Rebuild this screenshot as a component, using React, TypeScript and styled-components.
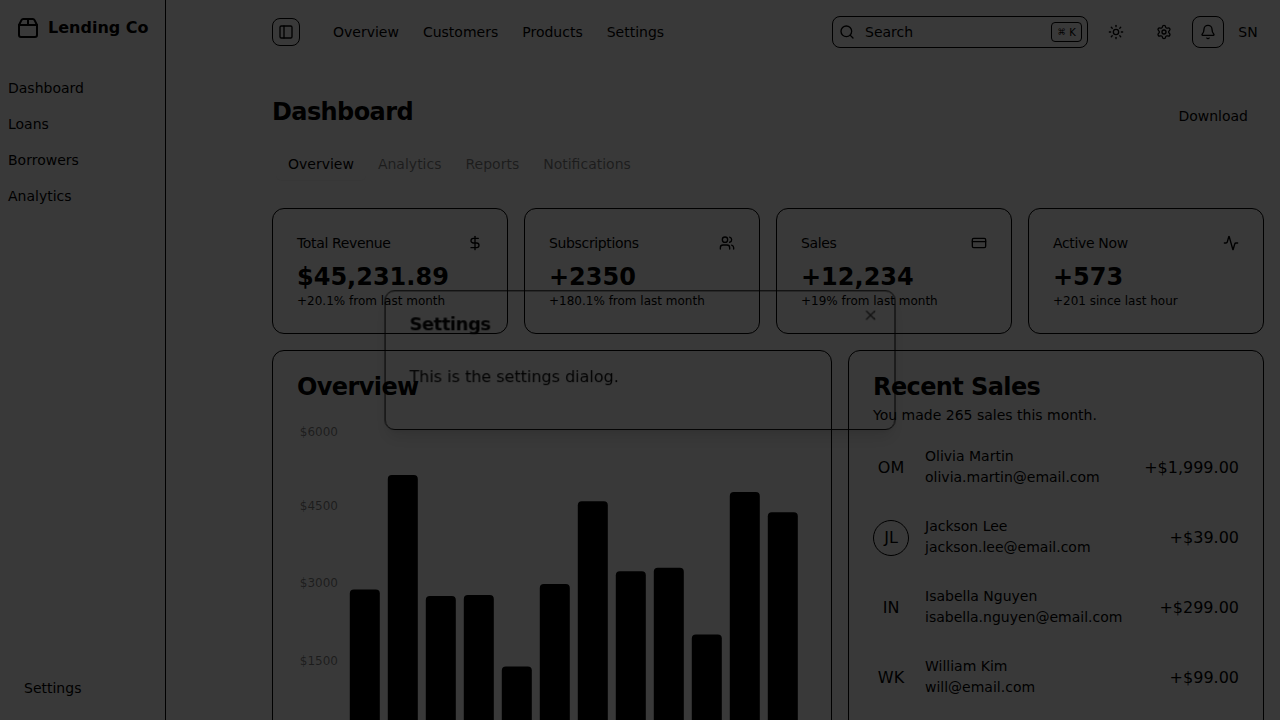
import React from 'react';
import styled, { createGlobalStyle } from 'styled-components';
import {
  Activity,
  Bell,
  CreditCard,
  DollarSign,
  PanelLeft,
  Search,
  Settings,
  Sun,
  Users,
  X,
} from 'lucide-react';

const GlobalStyle = createGlobalStyle`
  *, *::before, *::after { box-sizing: border-box; }
  html, body { margin: 0; height: 100%; overflow: hidden; }
  body {
    background: #fff;
    color: #000;
    font-family: "DejaVu Sans", sans-serif;
    font-size: 16px;
    line-height: 24px;
  }
  h1, h2, h3, p { margin: 0; font: inherit; }
  button { font: inherit; color: inherit; background: none; border: 0; padding: 0; }
`;

const Page = styled.div`
  display: flex;
  height: 100vh;
  overflow: hidden;
`;

const Sidebar = styled.aside`
  display: flex;
  flex-direction: column;
  flex: none;
  width: 166px;
  border-right: 1px solid #000;
  white-space: nowrap;
`;

const Brand = styled.div`
  display: flex;
  align-items: center;
  gap: 8px;
  padding: 16px;
  height: 56px;
  margin-bottom: 14px;
  font-weight: 700;
`;

const SideLinks = styled.nav`
  display: flex;
  flex-direction: column;
  flex: 1;
`;

const SideLink = styled.a`
  padding: 8px;
  font-size: 14px;
  line-height: 20px;
`;

const SideFooter = styled.div`
  padding: 6px 16px 14px;
  display: flex;
  flex-direction: column;
`;

const Main = styled.main`
  flex: 1;
  min-width: 0;
  padding: 0 16px 0 106px;
`;

const TopBar = styled.header`
  display: flex;
  align-items: center;
  height: 64px;
`;

const SquareButton = styled.button<{ $size: number; $outlined?: boolean }>`
  display: flex;
  align-items: center;
  justify-content: center;
  flex: none;
  width: ${(p) => p.$size}px;
  height: ${(p) => p.$size}px;
  border: 1px solid ${(p) => (p.$outlined ? '#000' : 'transparent')};
  border-radius: 8px;
  font-size: 14px;
`;

const TopNav = styled.nav`
  display: flex;
  gap: 24px;
  margin-left: 33px;
  font-size: 14px;
  line-height: 20px;
`;

const SearchBox = styled.div`
  display: flex;
  align-items: center;
  width: 256px;
  height: 32px;
  margin-left: auto;
  padding: 0 5px 0 6px;
  border: 1px solid #000;
  border-radius: 8px;
  font-size: 14px;
`;

const SearchLabel = styled.span`
  flex: 1;
  margin-left: 10px;
`;

const Shortcut = styled.kbd`
  display: flex;
  align-items: center;
  gap: 4px;
  width: 31px;
  height: 20px;
  padding: 0 0 0 6px;
  border: 1px solid #000;
  border-radius: 4px;
  font-family: "DejaVu Sans", sans-serif;
  font-size: 10px;
  line-height: 15px;
`;

const CommandKey = styled.span`
  font-family: "DejaVu Sans Mono", monospace;
  font-size: 12px;
  line-height: 16px;
`;

const Actions = styled.div`
  display: flex;
  margin-left: 12px;
`;

const ThemeSlot = styled.div`
  display: flex;
  gap: 16px;
  margin-right: 12px;
`;

const AccountSlot = styled.div`
  display: flex;
  gap: 8px;
`;

const TitleRow = styled.div`
  display: flex;
  justify-content: space-between;
  align-items: flex-start;
  height: 40px;
  margin: 32px 0 8px;
`;

const PageTitle = styled.h1`
  font-size: 24px;
  font-weight: 700;
  line-height: 32px;
  letter-spacing: -0.6px;
`;

const DownloadButton = styled.button`
  height: 40px;
  padding: 0 16px;
  font-size: 14px;
`;

const TabList = styled.div`
  display: flex;
  height: 40px;
  padding: 4px;
  margin-bottom: 24px;
`;

const Tab = styled.button<{ $active?: boolean }>`
  height: 32px;
  padding: 0 12px;
  border-radius: 6px;
  font-size: 14px;
  color: ${(p) => (p.$active ? '#000' : 'rgba(0, 0, 0, 0.5)')};
  box-shadow: ${(p) => (p.$active ? '0 1px 2px rgba(0, 0, 0, 0.05)' : 'none')};
`;

const StatGrid = styled.section`
  display: grid;
  grid-template-columns: repeat(4, 1fr);
  gap: 16px;
  margin-bottom: 16px;
`;

const Card = styled.section`
  border: 1px solid #000;
  border-radius: 12px;
`;

const StatCard = styled(Card)`
  padding: 24px;
`;

const StatHead = styled.div`
  display: flex;
  align-items: center;
  justify-content: space-between;
  margin-bottom: 8px;
  font-size: 14px;
  line-height: 20px;
  letter-spacing: -0.35px;
`;

const StatValue = styled.div`
  font-size: 24px;
  font-weight: 700;
  line-height: 32px;
`;

const StatNote = styled.p`
  font-size: 12px;
  line-height: 16px;
`;

const PanelGrid = styled.div`
  display: grid;
  grid-template-columns: 560px 416px;
  gap: 16px;
`;

const CardHead = styled.div`
  display: flex;
  flex-direction: column;
  gap: 6px;
  padding: 24px;
`;

const CardTitle = styled.h2`
  font-size: 24px;
  font-weight: 700;
  line-height: 24px;
  letter-spacing: -0.6px;
`;

const CardNote = styled.p`
  font-size: 14px;
  line-height: 20px;
`;

const ChartBody = styled.div`
  padding: 0 24px 24px 8px;
`;

const Chart = styled.svg`
  display: block;
  text { font-size: 12px; fill: #000; fill-opacity: 0.5; }
`;

const SaleList = styled.div`
  display: flex;
  flex-direction: column;
  gap: 32px;
  padding: 0 24px 24px;
`;

const SaleRow = styled.div`
  display: flex;
  align-items: center;
  height: 38px;
`;

const Avatar = styled.span<{ $ring?: boolean }>`
  display: flex;
  align-items: center;
  justify-content: center;
  width: 36px;
  height: 36px;
  border: 1px solid ${(p) => (p.$ring ? '#000' : 'transparent')};
  border-radius: 50%;
`;

const Person = styled.div`
  display: flex;
  flex-direction: column;
  gap: 4px;
  flex: 1;
  margin-left: 16px;
  font-size: 14px;
`;

const PersonName = styled.p`
  line-height: 14px;
`;

const PersonMail = styled.p`
  line-height: 20px;
`;

const Overlay = styled.div`
  position: fixed;
  inset: 0;
  background: rgba(0, 0, 0, 0.777);
`;

const Dialog = styled.div`
  position: fixed;
  left: 384px;
  top: 290px;
  width: 512px;
  display: grid;
  gap: 16px;
  padding: 24px;
  border: 1px solid #000;
  border-radius: 10px;
  opacity: 0.97;
  transform: translateY(0.14px) scale(0.998);
  will-change: transform;
  box-shadow: 0 10px 15px -3px rgba(0, 0, 0, 0.1), 0 4px 6px -4px rgba(0, 0, 0, 0.1);
`;

const DialogTitle = styled.h3`
  font-size: 18px;
  font-weight: 700;
  line-height: 18px;
  letter-spacing: -0.45px;
`;

const DialogText = styled.p`
  padding: 16px 0;
`;

const CloseButton = styled.button`
  position: absolute;
  top: 16px;
  right: 16px;
  display: flex;
  opacity: 0.7;
`;

const stats = [
  { label: 'Total Revenue', value: '$45,231.89', note: '+20.1% from last month', Icon: DollarSign },
  { label: 'Subscriptions', value: '+2350', note: '+180.1% from last month', Icon: Users },
  { label: 'Sales', value: '+12,234', note: '+19% from last month', Icon: CreditCard },
  { label: 'Active Now', value: '+573', note: '+201 since last hour', Icon: Activity },
];

const sales = [
  { initials: 'OM', name: 'Olivia Martin', mail: 'olivia.martin@email.com', amount: '+$1,999.00' },
  { initials: 'JL', name: 'Jackson Lee', mail: 'jackson.lee@email.com', amount: '+$39.00', ring: true },
  { initials: 'IN', name: 'Isabella Nguyen', mail: 'isabella.nguyen@email.com', amount: '+$299.00' },
  { initials: 'WK', name: 'William Kim', mail: 'will@email.com', amount: '+$99.00' },
];

const ticks = [
  { label: '$6000', y: 13.3 },
  { label: '$4500', y: 86.8 },
  { label: '$3000', y: 164.3 },
  { label: '$1500', y: 241.8 },
];

// Heights of the monthly bars above the zero line, in pixels.
const bars = [148.5, 263, 142, 143, 71.5, 154, 236.8, 166.8, 170.3, 103.5, 246, 225.8];
const BASELINE = 315;

const barPath = (x: number, height: number) => {
  const top = BASELINE - height;
  return `M${x},${top + 4}a4,4 0 0 1 4,-4h22a4,4 0 0 1 4,4V${BASELINE}h-30Z`;
};

const BrandIcon = () => (
  <svg width="24" height="24" viewBox="0 0 24 24" fill="none" stroke="currentColor" strokeWidth="2" strokeLinecap="round" strokeLinejoin="round">
    <path d="M3 9h18v10a2 2 0 0 1-2 2H5a2 2 0 0 1-2-2V9Z" />
    <path d="m3 9 2.45-4.9A2 2 0 0 1 7.24 3h9.52a2 2 0 0 1 1.8 1.1L21 9" />
    <path d="M12 3v6" />
  </svg>
);

export default function App() {
  return (
    <>
      <GlobalStyle />
      <Page>
        <Sidebar>
          <Brand>
            <BrandIcon />
            Lending Co
          </Brand>
          <SideLinks>
            {['Dashboard', 'Loans', 'Borrowers', 'Analytics'].map((item) => (
              <SideLink key={item}>{item}</SideLink>
            ))}
          </SideLinks>
          <SideFooter>
            <SideLink>Settings</SideLink>
          </SideFooter>
        </Sidebar>
        <Main>
          <TopBar>
            <SquareButton $size={28} $outlined>
              <PanelLeft size={16} />
            </SquareButton>
            <TopNav>
              {['Overview', 'Customers', 'Products', 'Settings'].map((item) => (
                <a key={item}>{item}</a>
              ))}
            </TopNav>
            <SearchBox>
              <Search size={16} />
              <SearchLabel>Search</SearchLabel>
              <Shortcut>
                <CommandKey>⌘</CommandKey>K
              </Shortcut>
            </SearchBox>
            <Actions>
              <ThemeSlot>
                <SquareButton $size={32}>
                  <Sun size={16} />
                </SquareButton>
                <SquareButton $size={32}>
                  <Settings size={16} />
                </SquareButton>
              </ThemeSlot>
              <AccountSlot>
                <SquareButton $size={32} $outlined>
                  <Bell size={16} />
                </SquareButton>
                <SquareButton $size={32}>SN</SquareButton>
              </AccountSlot>
            </Actions>
          </TopBar>
          <TitleRow>
            <PageTitle>Dashboard</PageTitle>
            <DownloadButton>Download</DownloadButton>
          </TitleRow>
          <TabList>
            {['Overview', 'Analytics', 'Reports', 'Notifications'].map((item, i) => (
              <Tab key={item} $active={i === 0}>
                {item}
              </Tab>
            ))}
          </TabList>
          <StatGrid>
            {stats.map(({ label, value, note, Icon }) => (
              <StatCard key={label}>
                <StatHead>
                  {label}
                  <Icon size={16} />
                </StatHead>
                <StatValue>{value}</StatValue>
                <StatNote>{note}</StatNote>
              </StatCard>
            ))}
          </StatGrid>
          <PanelGrid>
            <Card>
              <CardHead>
                <CardTitle>Overview</CardTitle>
              </CardHead>
              <ChartBody>
                <Chart width="526" height="350">
                  {ticks.map((tick) => (
                    <text key={tick.label} x="57" y={tick.y} textAnchor="end">
                      {tick.label}
                    </text>
                  ))}
                  {bars.map((height, i) => (
                    <path key={i} d={barPath(68.8 + i * 38, height)} />
                  ))}
                </Chart>
              </ChartBody>
            </Card>
            <Card>
              <CardHead>
                <CardTitle>Recent Sales</CardTitle>
                <CardNote>You made 265 sales this month.</CardNote>
              </CardHead>
              <SaleList>
                {sales.map((sale) => (
                  <SaleRow key={sale.initials}>
                    <Avatar $ring={sale.ring}>{sale.initials}</Avatar>
                    <Person>
                      <PersonName>{sale.name}</PersonName>
                      <PersonMail>{sale.mail}</PersonMail>
                    </Person>
                    <span>{sale.amount}</span>
                  </SaleRow>
                ))}
              </SaleList>
            </Card>
          </PanelGrid>
        </Main>
      </Page>
      <Overlay />
      <Dialog role="dialog">
        <DialogTitle>Settings</DialogTitle>
        <DialogText>This is the settings dialog.</DialogText>
        <CloseButton aria-label="Close">
          <X size={16} />
        </CloseButton>
      </Dialog>
    </>
  );
}
